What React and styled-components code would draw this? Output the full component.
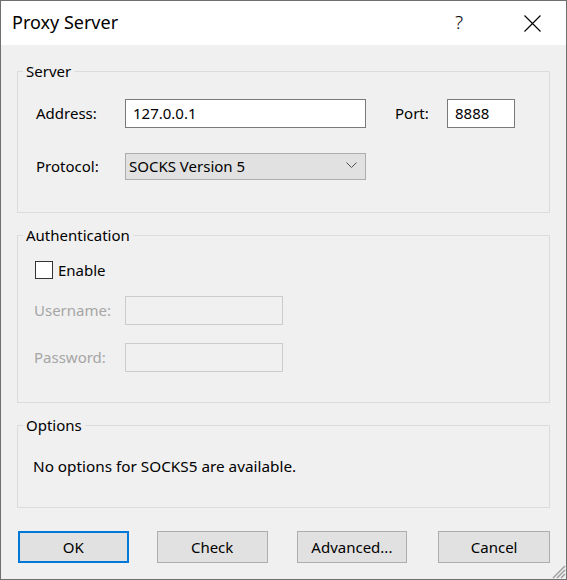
import React from "react";
import styled, { createGlobalStyle } from "styled-components";

const Global = createGlobalStyle`
  html, body { margin: 0; padding: 0; background: #f0f0f0; }
  * { box-sizing: border-box; }
  body { font-family: "Noto Sans", "Open Sans", sans-serif; }
`;

const Window = styled.div`
  position: relative;
  width: 567px;
  height: 580px;
  border: 1px solid #6f6f6f;
  background: #f0f0f0;
  display: flex;
  flex-direction: column;
  font-family: "Noto Sans", sans-serif;
  font-size: 15px;
  color: #000;
`;

const TitleBar = styled.div`
  height: 44px;
  background: #fff;
  display: flex;
  align-items: center;
  padding-left: 11px;
  flex-shrink: 0;
`;

const Title = styled.div`
  flex: 1;
  font-size: 18px;
  line-height: 24px;
  margin-top: -2px;
`;

const HelpGlyph = styled.div`
  width: 20px;
  text-align: center;
  font-size: 19px;
  font-weight: 300;
  margin-right: 40px;
  margin-top: -2px;
`;

const CloseBtn = styled.div`
  width: 46px;
  height: 44px;
  margin-right: 11px;
  display: flex;
  align-items: center;
  justify-content: center;
`;

const Body = styled.div`
  flex: 1;
  display: flex;
  flex-direction: column;
  padding: 26px 16px 0 16px;
`;

const Group = styled.div`
  position: relative;
  border: 1px solid #dcdcdc;
  height: ${(p) => p.$h}px;
  margin-bottom: 22px;
  padding: ${(p) => p.$pad};
`;

const Legend = styled.span`
  position: absolute;
  top: -12px;
  left: 5px;
  padding: 0 3px;
  background: #f0f0f0;
  line-height: 22px;
`;

const Row = styled.div`
  display: flex;
  align-items: center;
  height: ${(p) => p.$h || 29}px;
  margin-bottom: ${(p) => p.$mb || 0}px;
`;

const Label = styled.div`
  width: ${(p) => p.$w}px;
  margin-top: -2px;
  color: ${(p) => (p.$disabled ? "#a6a6a6" : "#000")};
`;

const TextBox = styled.div`
  width: ${(p) => p.$w}px;
  height: 29px;
  border: 1px solid ${(p) => (p.$disabled ? "#cccccc" : "#7a7a7a")};
  background: ${(p) => (p.$disabled ? "#f0f0f0" : "#fff")};
  padding: 0 0 2px 7px;
  display: flex;
  align-items: center;
  margin-right: ${(p) => p.$mr || 0}px;
`;

const Select = styled.div`
  width: 241px;
  height: 27px;
  border: 1px solid #adadad;
  background: #e1e1e1;
  display: flex;
  align-items: center;
  justify-content: space-between;
  padding: 0 8px 2px 3px;
`;

const CheckRow = styled.label`
  display: flex;
  align-items: center;
  height: 19px;
  margin-bottom: 17px;
  gap: 5px;
`;

const CheckBox = styled.span`
  width: 18px;
  height: 18px;
  border: 1px solid #333;
  background: #fff;
  margin-left: 1px;
`;

const Note = styled.div`
  padding-left: 15px;
  line-height: 20px;
  font-size: 15.3px;
`;

const ButtonRow = styled.div`
  display: flex;
  padding: 1px 0 0 1px;
`;

const Button = styled.div`
  width: ${(p) => p.$w || 111}px;
  height: 32px;
  margin-left: ${(p) => p.$gap || 0}px;
  background: #e1e1e1;
  border: ${(p) => (p.$default ? "2px solid #0078d7" : "1px solid #adadad")};
  display: flex;
  align-items: center;
  justify-content: center;
  padding-bottom: 1px;
`;

const Grip = styled.svg`
  position: absolute;
  right: 0;
  bottom: 0;
`;

export default function App() {
  return (
    <>
      <Global />
      <Window>
        <TitleBar>
          <Title>Proxy Server</Title>
          <HelpGlyph>?</HelpGlyph>
          <CloseBtn>
            <svg width="17" height="17" viewBox="0 0 17 17">
              <path d="M0.5 0.5 L16.5 16.5 M16.5 0.5 L0.5 16.5" stroke="#000" strokeWidth="1.1" fill="none" />
            </svg>
          </CloseBtn>
        </TitleBar>
        <Body>
          <Group $h={142} $pad="27px 0 0 18px">
            <Legend>Server</Legend>
            <Row $mb={25}>
              <Label $w={89}>Address:</Label>
              <TextBox $w={241} $mr={29}>127.0.0.1</TextBox>
              <Label $w={52}>Port:</Label>
              <TextBox $w={68}>8888</TextBox>
            </Row>
            <Row $h={27}>
              <Label $w={89}>Protocol:</Label>
              <Select>
                <span>SOCKS Version 5</span>
                <svg width="11" height="7" viewBox="0 0 11 7">
                  <path d="M0.5 0.5 L5.5 5.5 L10.5 0.5" stroke="#505050" strokeWidth="1" fill="none" />
                </svg>
              </Select>
            </Row>
          </Group>
          <Group $h={168} $pad="24px 0 0 16px">
            <Legend>Authentication</Legend>
            <CheckRow>
              <CheckBox />
              <span>Enable</span>
            </CheckRow>
            <Row $mb={18}>
              <Label $w={91} $disabled>Username:</Label>
              <TextBox $w={158} $disabled />
            </Row>
            <Row>
              <Label $w={91} $disabled>Password:</Label>
              <TextBox $w={158} $disabled />
            </Row>
          </Group>
          <Group $h={83} $pad="30px 0 0 0">
            <Legend>Options</Legend>
            <Note>No options for SOCKS5 are available.</Note>
          </Group>
          <ButtonRow>
            <Button $default>OK</Button>
            <Button $gap={28}>Check</Button>
            <Button $gap={29}>Advanced...</Button>
            <Button $gap={31} $w={112}>Cancel</Button>
          </ButtonRow>
        </Body>
        <Grip width="16" height="16" viewBox="0 0 16 16">
          <path d="M15 3 L3 15 M15 7 L7 15 M15 11 L11 15" stroke="#a0a0a0" strokeWidth="1.5" fill="none" />
        </Grip>
      </Window>
    </>
  );
}
